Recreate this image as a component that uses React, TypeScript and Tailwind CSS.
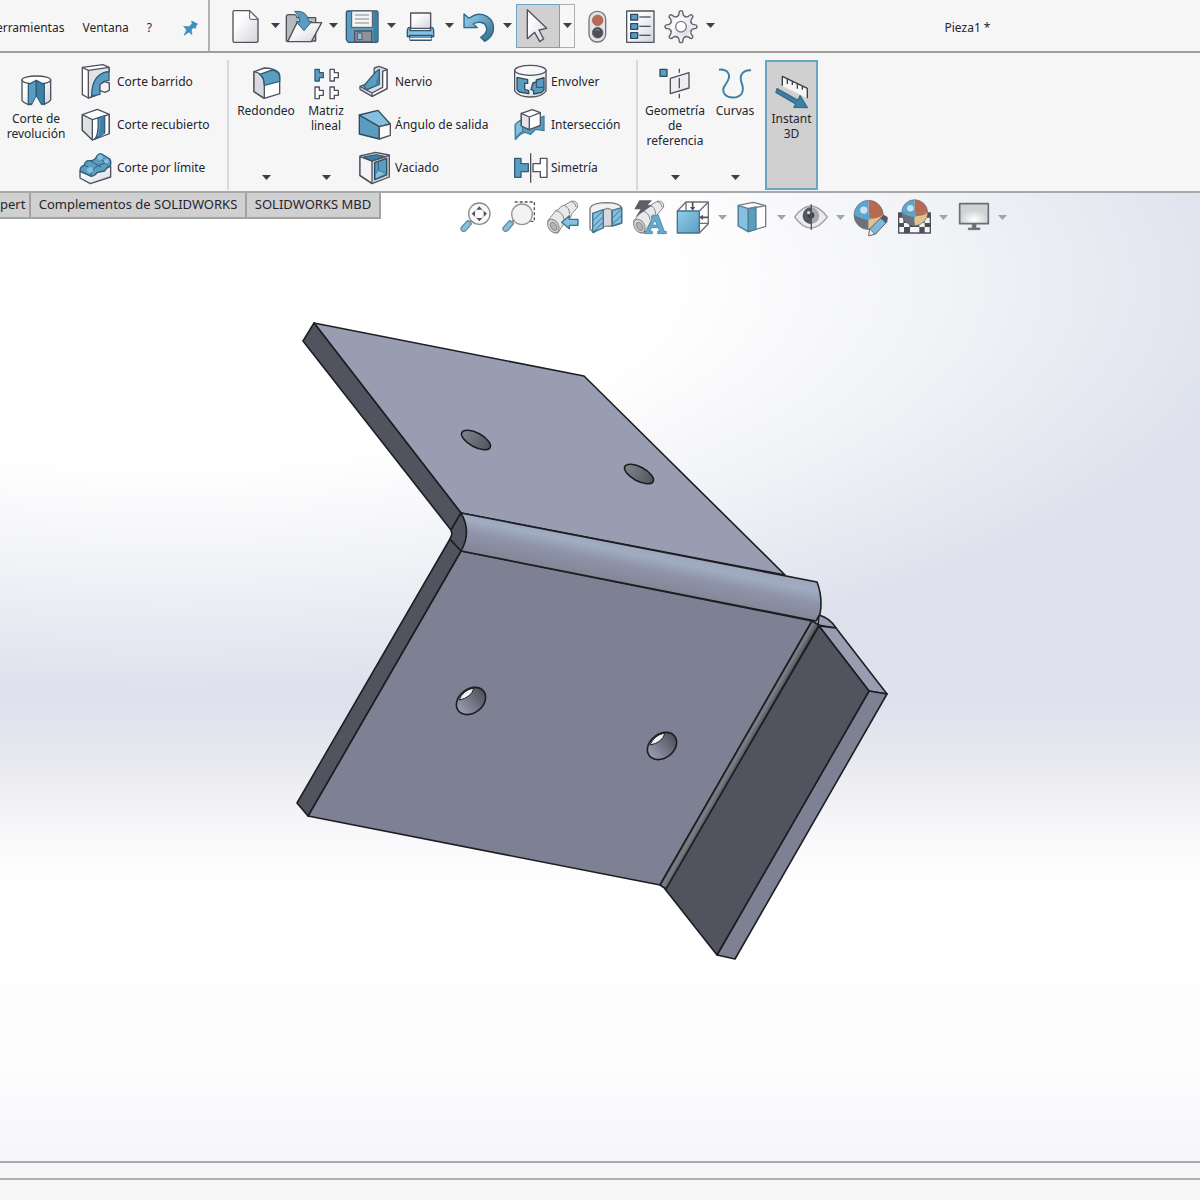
import React from "react";
import clsx from "clsx";

const INK = "#50525d";
const BLUE = "#5b9dc0";
const LIGHT_BLUE = "#86c0e0";
const DEEP_BLUE = "#3f7fa3";

type IconProps = { box: string; className?: string; children: React.ReactNode };

// Icons are drawn at 3 units per pixel
function Icon({ box, className = "size-9", children }: IconProps) {
  return (
    <svg
      viewBox={box}
      className={clsx("shrink-0", className)}
      fill="none"
      stroke={INK}
      strokeWidth={4}
      strokeLinejoin="round"
      aria-hidden="true"
    >
      {children}
    </svg>
  );
}

function Caret({ className = "text-[#3c3e4a]" }: { className?: string }) {
  return (
    <svg viewBox="0 0 18 10" className={clsx("h-[5px] w-[9px] shrink-0", className)} aria-hidden="true">
      <path d="M0 0h18L9 10z" fill="currentColor" />
    </svg>
  );
}

/* ---------- top bar icons ---------- */

const PinIcon = () => (
  <Icon box="546 54 54 54" className="size-[18px]">
    <path
      d="M575 60l18 9-5 5-1 8-7-2-6 6 2 15-9-8-15 10 8-16-9-11 16 1 9-9z"
      fill="#3d8fbc"
      stroke="#3d8fbc"
      strokeWidth={2}
    />
  </Icon>
);

const NewIcon = () => (
  <Icon box="678 17 120 120" className="size-10">
    <path d="M703 31h46l25 25v66q0 4-4 4h-67q-4 0-4-4V35q0-4 4-4z" fill="url(#paper)" />
    <path d="M749 32v22q0 3 3 3h22z" fill="#fff" strokeWidth={3} />
  </Icon>
);

const OpenIcon = () => (
  <Icon box="852 17 120 120" className="size-10">
    <path d="M859 122V50q0-7 7-7h18q5 0 7 9h56v70z" fill="#b9babd" />
    <path d="M891 67h74l-31 57h-71z" fill="url(#paper)" />
    <path d="M884 33q38-4 42 31h9l-23 27-24-27h12q-2-21-16-31z" fill={BLUE} stroke="#2f6685" strokeWidth={3} />
  </Icon>
);

const SaveIcon = () => (
  <Icon box="1026 17 120 120" className="size-10">
    <path d="M1044 32h85q5 0 5 5v84q0 5-5 5h-84l-6-8V37q0-5 5-5z" fill={BLUE} stroke="#33566b" />
    <path d="M1120 34h8q4 0 4 4v82q0 4-4 4h-8z" fill={DEEP_BLUE} stroke="none" />
    <path d="M1055 32h62v49h-62z" fill="#f4f4f4" strokeWidth={3} />
    <path d="M1065 44h42M1065 56h42M1065 68h42" strokeWidth={3} stroke="#85878f" />
    <path d="M1064 92h51v33h-51z" fill="#8f929b" />
    <path d="M1072 98h14v20h-14z" fill={LIGHT_BLUE} strokeWidth={3} />
  </Icon>
);

const PrintIcon = () => (
  <Icon box="60 17 120 120" className="size-10">
    <path d="M92 38h60v46H92z" fill="url(#paper)" />
    <path d="M82 92q0-11 8-11h2l-2 10h62l-1-10h2q8 0 8 11v17H82z" fill={LIGHT_BLUE} stroke="#33566b" />
    <path d="M88 105h68l-3 15H91z" fill={BLUE} stroke="#33566b" />
    <path d="M90 115h64" stroke="#fff" />
  </Icon>
);

const UndoIcon = () => (
  <Icon box="234 17 120 120" className="size-10">
    <path
      d="M252 41l15 13q30-22 55-5 23 15 18 43-4 20-26 31l-12-12q18-10 18-25-2-22-25-20-10 1-15 5l12 11h-40z"
      fill="url(#undo)"
      stroke="#2f6685"
    />
  </Icon>
);

const CursorIcon = () => (
  <Icon box="414 17 120 120" className="size-10">
    <path d="M442 28l58 56-23 5 14 27-12 8-15-28-22 19z" fill="url(#paper)" />
  </Icon>
);

const LightsIcon = () => (
  <Icon box="590 17 120 120" className="size-10">
    <rect x="626" y="33" width="50" height="92" rx="24" fill="#e3e4e6" stroke="#75777e" />
    <circle cx="652" cy="60" r="16" fill="#b96a55" stroke="#a05a49" strokeWidth={2} />
    <circle cx="652" cy="97" r="16" fill="#4c4e58" strokeWidth={2} />
    <path d="M646 90q6-5 12 0" stroke="#9a9ca5" strokeWidth={3} />
  </Icon>
);

const ListIcon = () => (
  <Icon box="719 17 120 120" className="size-10">
    <path d="M739 32h82v94h-82z" fill="url(#paper)" />
    {[42, 70, 97].map((y) => (
      <g key={y}>
        <path d={`M751 ${y}h21v17h-21z`} fill={BLUE} stroke="#2e4c61" />
        <path d={`M777 ${y + 8}h34`} />
      </g>
    ))}
  </Icon>
);

const GearIcon = () => {
  const teeth = [0, 45, 90, 135, 180, 225, 270, 315];
  const tooth = "M892 50q9-4 9-10 0-9 6-9t6 9q0 6 9 10";
  return (
    <Icon box="847 17 120 120" className="size-10">
      <circle cx="907" cy="79" r="32" fill="url(#paper)" stroke="none" />
      {teeth.map((a) => (
        <path key={a} d={tooth} transform={`rotate(${a} 907 79)`} fill="#eeeff3" stroke="#62646c" />
      ))}
      <circle cx="907" cy="79" r="16" fill="#fff" stroke="#7b7d85" />
    </Icon>
  );
};

/* ---------- ribbon icons ---------- */

const RevolveCutIcon = () => (
  <Icon box="54 60 108 108">
    <path d="M66 75v62q6 8 19 12l48-2q14-4 19-12V75z" fill="url(#paper)" />
    <ellipse cx="109" cy="75" rx="43" ry="12" fill="#fff" />
    <path d="M85 89l24-13v49l-12 20-12 4z" fill={BLUE} stroke="#2e5f7c" />
    <path d="M109 76l24 13v60l-12-5-12-19z" fill={DEEP_BLUE} stroke="#2e5f7c" />
    <path d="M97 150l12-23 13 23z" fill="#f6f6f6" stroke="#f6f6f6" strokeWidth={2} />
  </Icon>
);

const SweepCutIcon = () => (
  <Icon box="234 27 108 108">
    <path d="M247 37l62-8 18 8v12l-40 73-22 7-18-10z" fill="#fff" />
    <path d="M265 46l62-9v13q-50 6-50 74l-12 5z" fill="#e2e3e8" />
    <path d="M247 37l18 9" />
    <path d="M327 50v26q-24 2-27 20v22l-25 5q0-68 52-73z" fill={BLUE} stroke="#2e5f7c" />
    <path d="M300 88l13-8 15 4v22l-13 6-15-5z" fill="#f2f2f6" />
  </Icon>
);

const LoftCutIcon = () => (
  <Icon box="234 156 108 108">
    <path d="M247 179l45-16 36 15v58l-50 19-31-29z" fill="#fff" />
    <path d="M247 179l30 15v61l-30-29z" fill="#dfe0e6" />
    <path d="M277 194l51-16v58" />
    <path d="M294 189l20-6v51l-31 19q14-11 11-64z" fill={BLUE} stroke="#2e5f7c" />
    <path d="M312 184v47l-16 9q6-20 5-53z" fill={DEEP_BLUE} stroke="none" />
  </Icon>
);

const BoundaryCutIcon = () => (
  <Icon box="234 285 108 108">
    <path d="M240 349l32 14 60-30v33l-61 20-31-17z" fill="url(#paper)" />
    <path
      d="M240 348q0-14 12-17 5-16 17-14 16 1 21-13 7-11 15-7l25 15q5 12 0 22-10 2-16 14-13 2-22 4-8 11-18 12z"
      fill={BLUE}
      stroke="#2e5f7c"
    />
    <path d="M252 331q12 4 26 12M270 317l33 19M290 304q12 6 34 27M272 362q2-30 53-40" stroke="#2e5f7c" strokeWidth={3} />
    <circle cx="270" cy="345" r="9" fill={LIGHT_BLUE} stroke="none" />
    <circle cx="300" cy="307" r="8" fill={LIGHT_BLUE} stroke="none" />
    <circle cx="319" cy="319" r="7" fill={LIGHT_BLUE} stroke="none" />
  </Icon>
);

const FilletIcon = () => (
  <Icon box="84 36 108 108">
    <path d="M102 50l31-11q14 0 27 4 18 6 19 17v56l-46 14-31-20z" fill="#fff" />
    <path d="M102 50q29 4 31 40v40l-31-20z" fill="#d9dae1" />
    <path d="M119 58l38-13q21 4 22 22v12l-46 12q0-25-14-33z" fill={BLUE} stroke="#2e5f7c" />
  </Icon>
);

const TEE = "M0 2h13v10h12v15H13v10H0z";

const PatternIcon = () => (
  <Icon box="264 36 108 108">
    <path d={TEE} transform="translate(285 41)" fill={BLUE} stroke="#2e5f7c" />
    <path d={TEE} transform="translate(330 41)" fill="#fff" />
    <path d={TEE} transform="translate(285 94)" fill="#fff" />
    <path d={TEE} transform="translate(330 94)" fill="#fff" />
  </Icon>
);

const RibIcon = () => (
  <Icon box="405 27 108 108">
    <path d="M460 39l14-5 24 9v58l-45 23-36-21v-9l41-15z" fill="#dcdde3" />
    <path d="M485 49l13-6v58l-45 23v-10l32-17zM417 94l36 20" fill="#fff" />
    <path d="M475 43v45l-37 16-10-11 35-41z" fill={BLUE} stroke="#2e5f7c" />
    <path d="M475 43v45l-12 5z" fill={DEEP_BLUE} stroke="none" />
  </Icon>
);

const DraftIcon = () => (
  <Icon box="405 156 108 108">
    <path d="M415 180l60 34v38l-60-15z" fill={BLUE} stroke="#2e4c61" />
    <path d="M415 180l56-14 37 41-33 8z" fill={LIGHT_BLUE} stroke="#2e4c61" />
    <path d="M475 215l33-8v34l-33 11z" fill="#fafafa" />
  </Icon>
);

const ShellIcon = () => (
  <Icon box="405 285 108 108">
    <path d="M417 303l47-11 41 8v66l-52 20-36-24z" fill="#d4d5d9" />
    <path d="M417 305l36 13v67l-36-24z" fill="#f4f4f7" />
    <path d="M461 323l36-13v50l-36 14z" fill={BLUE} stroke="#2e4c61" />
    <path d="M428 306l38-7 28 6-41 13z" fill={DEEP_BLUE} stroke="#2e4c61" strokeWidth={3} />
    <path d="M472 320v26l25 10-34 16v-14l9-12z" fill={LIGHT_BLUE} stroke="#2e5f7c" strokeWidth={2} />
    <path d="M453 318l52-17" />
  </Icon>
);

const WrapIcon = () => (
  <Icon box="216 27 108 108">
    <path d="M224 46v62q12 18 47 18t47-18V46z" fill="url(#paper)" />
    <ellipse cx="271" cy="46" rx="47" ry="15" fill="#f7f7fa" />
    <path d="M231 67l32 7v11h-9v18l12 4v9l-28-5-7-7z" fill={BLUE} stroke="#2e4c61" />
    <path d="M279 84l10-3v-6l23-7v37l-9 8-22 4v-10l-8-4z" fill={BLUE} stroke="#2e4c61" />
    <path d="M289 80v17h20" stroke="#2e4c61" strokeWidth={3} />
  </Icon>
);

const IntersectIcon = () => (
  <Icon box="216 156 108 108">
    <path d="M226 209q16-18 34-14 26 4 52-12v44l-25-4-15 15-16-6q-15 2-29 21z" fill={BLUE} stroke={DEEP_BLUE} />
    <path d="M226 209q10-13 22-13v34q-12 6-22 23z" fill={LIGHT_BLUE} stroke={DEEP_BLUE} />
    <path d="M244 175l33-11 24 9v38l-33 13-24-11z" fill="#fff" />
    <path d="M244 175l24 11v38l-24-11zM268 186l33-13" fill="#e4e5ea" />
  </Icon>
);

const MirrorIcon = () => (
  <Icon box="216 285 108 108">
    <path d="M224 310h19v16h22v24h-22v17h-19z" fill={BLUE} stroke="#2e5f7c" />
    <path d="M321 310h-20v16h-22v24h22v17h20z" fill="#fff" />
    <path d="M272 295v88" />
  </Icon>
);

const GeometryIcon = () => (
  <Icon box="81 36 108 108">
    <path d="M90 43h21v21H90z" fill={BLUE} stroke="#2e4c61" />
    <path d="M121 70l56-17v46l-56 17z" fill="#eeeef2" />
    <path d="M148 41v12M148 69v31M148 116v14" />
  </Icon>
);

const CurvesIcon = () => (
  <Icon box="264 36 108 108">
    <path
      d="M270 44c28-2 35 16 27 32-9 18-22 25-9 43 12 12 38 12 49-2 16-22-10-38 0-57 6-11 17-15 29-14"
      stroke={DEEP_BLUE}
      strokeWidth={6}
    />
  </Icon>
);

const Instant3dIcon = () => (
  <Icon box="429 60 108 108">
    <path d="M454 64l75 36v30l-75-37z" fill="#f6f6f6" stroke="none" />
    <path d="M454 92V64l75 36v30M469 72v15M484 79v11M499 86v15M514 93v11" stroke="#3b3d48" />
    <path d="M438 101l63 35 6-14 22 36-40-1 5-10-59-35z" fill={DEEP_BLUE} stroke="#336b8b" />
  </Icon>
);

/* ---------- view toolbar icons ---------- */

const Handle = ({ x }: { x: number }) => (
  <g transform={`translate(${x} 0)`}>
    <path d="M83 91l12 10-17 20q-6 6-12 1-6-5-1-11z" fill={LIGHT_BLUE} stroke="#6a8ba0" />
    <path d="M90 96l7-7" stroke="#85878f" strokeWidth={7} />
  </g>
);

const ZoomFitIcon = () => (
  <Icon box="45 21 120 120" className="size-10">
    <Handle x={0} />
    <circle cx="118" cy="71" r="32" fill="#fafafa" stroke="#8a8b90" />
    <path d="M118 49l9 10h-18zM118 94l9-10h-18zM95 71l10-9v18zM141 71l-10-9v18z" fill={INK} stroke="none" />
    <path d="M108 61l-2 3M128 61l3 3M106 80l3 3M131 79l-4 4" stroke="#9a9ca2" strokeWidth={3} />
  </Icon>
);

const ZoomAreaIcon = () => (
  <Icon box="177 21 120 120" className="size-10">
    <path d="M224 36h59v58h-40" strokeDasharray="9 6" />
    <Handle x={126} />
    <circle cx="246" cy="73" r="31" fill="#f3f3f4" stroke="#96979c" />
  </Icon>
);

const Scope = ({ x }: { x: number }) => (
  <g transform={`translate(${x} 0)`} stroke="#88898e" strokeWidth={3}>
    <path d="M323 93l24-31q12-3 16-13l10-3 22-13q20 0 18 18l-17 20-4 12-14 7-24 39q-26 4-31-36z" fill="#e9e9ea" />
    <path d="M347 62q22 4 25 27M372 46q16 5 17 27M393 34q14 4 16 18" />
    <ellipse cx="340" cy="108" rx="15" ry="22" transform="rotate(-32 340 108)" fill="#d5d5d5" />
    <ellipse cx="341" cy="109" rx="8" ry="13" transform="rotate(-32 341 109)" fill="#b4b4b6" />
  </g>
);

const PreviousViewIcon = () => (
  <Icon box="309 21 120 120" className="size-10">
    <Scope x={0} />
    <path d="M365 97l23-20v11h26v18h-26v10z" fill={LIGHT_BLUE} stroke="#3a7190" />
  </Icon>
);

const SectionIcon = () => (
  <Icon box="441 21 120 120" className="size-10">
    <path d="M450 55q5-16 46-17 44 0 49 16v45l-30 9h-25l-29 20-11-11z" fill="#f1f1f2" stroke="#77797f" />
    <path d="M490 60q12-9 25 0v47l-25 3z" fill="#d7d8db" stroke="#8c8d92" />
    <path d="M458 70l32-11v55l-32 13zM517 61l28-8v46l-28 9z" fill={LIGHT_BLUE} stroke="#41728f" />
    <path d="M459 91l27-25M460 109l29-28M463 123l26-26M519 83l23-24M519 101l25-25" stroke="#41728f" strokeWidth={3} />
  </Icon>
);

const DynamicIcon = () => (
  <Icon box="573 21 120 120" className="size-10">
    <Scope x={258} />
    <path d="M598 31h38l-13 15h14l-50 35 15-23h-19z" fill="#5d5f68" stroke="none" />
    <path
      d="M638 75h17l18 49h6v7h-26v-7h6l-4-11h-21l-4 11h7v7h-24v-7h7l17-42h-4zm7 16l-8 14h14z"
      fill="#63abd3"
      stroke="#41728f"
      strokeWidth={2}
      fillRule="evenodd"
    />
  </Icon>
);

const OrientationIcon = () => (
  <Icon box="699 21 120 120" className="size-10">
    <path d="M712 63l26-27h67v65l-27 28M738 36v27M805 36l-27 27M778 100h27" fill="none" stroke="#6d6f77" />
    <path d="M712 63h66v66h-66z" fill="url(#glass)" stroke="#41728f" />
    <path d="M758 36v18M804 82h-18" strokeWidth={5} />
    <path d="M758 62l-8-11h16zM777 82l12-8v16z" fill={INK} stroke="none" />
  </Icon>
);

const DisplayStyleIcon = () => (
  <Icon box="36 21 120 120" className="size-10">
    <path d="M55 46l45-9 37 10v62l-52 16-30-17z" fill="#fff" stroke="#7a7c83" />
    <path d="M55 46l30 10v69l-30-17z" fill={LIGHT_BLUE} stroke="#4e7f9b" />
    <path d="M85 56l23-5v67l-23 7z" fill={BLUE} stroke="#4e7f9b" />
    <path d="M85 56l52-9" stroke="#7a7c83" />
  </Icon>
);

const HideShowIcon = () => (
  <Icon box="213 21 120 120" className="size-10">
    <path d="M224 81q48-66 98 0-50 66-98 0z" fill="#ececee" stroke="#a2a3a8" />
    <circle cx="273" cy="77" r="25" fill="#a8a9ad" stroke="none" />
    <path d="M273 52a25 25 0 0 0 0 50z" fill="#54565f" stroke="none" />
    <circle cx="273" cy="76" r="10" fill="#3f414a" stroke="none" />
    <circle cx="266" cy="68" r="5" fill="#d5d5d8" stroke="none" />
    <path d="M274 43v76" />
  </Icon>
);

const Ball = ({ cx, cy, r }: { cx: number; cy: number; r: number }) => (
  <g stroke="none">
    <path d={`M${cx} ${cy}V${cy - r}a${r} ${r} 0 0 0-${r} ${r}z`} fill="#5ba6d0" />
    <path d={`M${cx} ${cy}V${cy - r}a${r} ${r} 0 0 1 ${r} ${r}z`} fill="#b8694f" />
    <path d={`M${cx} ${cy}H${cx - r}a${r} ${r} 0 0 0 ${r} ${r}z`} fill="#6a7379" />
    <path d={`M${cx} ${cy}H${cx + r}a${r} ${r} 0 0 1-${r} ${r}z`} fill="#e0c390" />
    {/* the colour seams bulge towards the viewer */}
    <path d={`M${cx - r} ${cy}q${r} ${r / 2} ${r + 6} ${r / 4}V${cy - 2}z`} fill="#5ba6d0" />
    <path d={`M${cx + 6} ${cy + r / 4}q${r / 2} 0 ${r - 7}-${r / 4}H${cx}z`} fill="#b8694f" />
    <circle cx={cx - r / 3} cy={cy - r / 3} r={r / 4} fill="#c4e3f3" />
    <circle cx={cx} cy={cy} r={r} fill="none" stroke="#6b6d75" strokeWidth={2} />
  </g>
);

const AppearanceIcon = () => (
  <Icon box="396 21 120 120" className="size-10">
    <Ball cx={446} cy={75} r={44} />
    <path d="M482 84l20 10-35 38-20 5 2-20z" fill="#7fb9da" stroke="#4f6070" strokeWidth={3} />
    <path d="M482 84l8-8q12 2 13 10l-6 12z" fill="#565862" strokeWidth={2} />
    <path d="M449 116l15 16-18 6z" fill="#f1ede4" strokeWidth={2} />
  </Icon>
);

const SceneIcon = () => (
  <Icon box="522 21 120 120" className="size-10">
    <path d="M536 69h95v60h-95z" fill="#f4f4f4" />
    <path
      d="M536 69h14v14h-14zM614 69h17v14h-17zM550 83h16v16h-16zM600 83h14v16h-14zM536 99h16v12h-16zM568 99h30v12h-30zM614 99h17v12h-17zM552 111h18v18h-18zM598 111h16v18h-16z"
      fill="#4c4e58"
      stroke="none"
    />
    <Ball cx={584} cy={68} r={39} />
  </Icon>
);

const MonitorIcon = () => (
  <Icon box="699 21 120 120" className="size-10">
    <path d="M719 41h86v60h-86z" fill="url(#screen)" stroke="#6c6e76" strokeWidth={5} />
    <path d="M757 102h11v12h12v5h-35v-5h12z" fill="#6c6e76" stroke="#6c6e76" strokeWidth={2} />
  </Icon>
);

/* ---------- chrome ---------- */

function ToolButton({ label, caret, children }: { label: string; caret?: boolean; children: React.ReactNode }) {
  return (
    <button
      type="button"
      aria-label={label}
      className={clsx("flex h-11 items-center", caret ? "w-[58px] gap-[5px]" : "w-[43px] justify-center")}
    >
      {children}
      {caret && <Caret />}
    </button>
  );
}

function ViewButton({ label, caret, children }: { label: string; caret?: boolean; children: React.ReactNode }) {
  return (
    <button
      type="button"
      aria-label={label}
      className={clsx("flex h-10 items-center", caret ? "w-[59px] gap-[5px]" : "w-11 justify-center")}
    >
      {children}
      {caret && <Caret className="text-[#a3a4a9]" />}
    </button>
  );
}

type RibbonItem = { label: string; icon: React.ReactNode };

function RibbonList({ items, className }: { items: RibbonItem[]; className: string }) {
  return (
    <div className={clsx("flex shrink-0 flex-col", className)}>
      {items.map((it) => (
        <button key={it.label} type="button" className="flex h-[43px] items-center gap-[3px] text-left whitespace-nowrap">
          {it.icon}
          <span>{it.label}</span>
        </button>
      ))}
    </div>
  );
}

function RibbonButton({ lines, icon }: { lines: string[]; icon: React.ReactNode }) {
  return (
    <button type="button" className="flex w-[60px] shrink-0 flex-col items-center pt-[7px] pb-[10px] leading-[15px]">
      {icon}
      {lines.map((l) => (
        <span key={l} className="whitespace-nowrap">{l}</span>
      ))}
      <Caret className="mt-auto text-[#3c3e4a]" />
    </button>
  );
}

const Divider = () => <div className="w-[2px] shrink-0 bg-[#d5d9e3]" />;

const cuts: RibbonItem[] = [
  { label: "Corte barrido", icon: <SweepCutIcon /> },
  { label: "Corte recubierto", icon: <LoftCutIcon /> },
  { label: "Corte por límite", icon: <BoundaryCutIcon /> },
];

const features: RibbonItem[] = [
  { label: "Nervio", icon: <RibIcon /> },
  { label: "Ángulo de salida", icon: <DraftIcon /> },
  { label: "Vaciado", icon: <ShellIcon /> },
];

const bodies: RibbonItem[] = [
  { label: "Envolver", icon: <WrapIcon /> },
  { label: "Intersección", icon: <IntersectIcon /> },
  { label: "Simetría", icon: <MirrorIcon /> },
];

function TopBar() {
  return (
    <header className="flex h-[53px] items-center border-b-2 border-[#a09e9c]">
      <nav className="flex h-full w-[210px] shrink-0 items-center justify-end gap-[18px] overflow-hidden border-r-2 border-[#b4b2b0] pt-1 pr-2 whitespace-nowrap">
        <button type="button">erramientas</button>
        <button type="button">Ventana</button>
        <button type="button">?</button>
        <button type="button" aria-label="Fijar menú" className="ml-3">
          <PinIcon />
        </button>
      </nav>
      <div className="ml-4 flex shrink-0 items-center">
        <ToolButton label="Nuevo" caret><NewIcon /></ToolButton>
        <ToolButton label="Abrir" caret><OpenIcon /></ToolButton>
        <ToolButton label="Guardar" caret><SaveIcon /></ToolButton>
        <ToolButton label="Imprimir" caret><PrintIcon /></ToolButton>
        <ToolButton label="Deshacer" caret><UndoIcon /></ToolButton>
        <button
          type="button"
          aria-label="Seleccionar"
          className="flex h-11 w-11 items-center justify-center border border-[#6aa5c5] bg-[#d0d0d0]"
        >
          <CursorIcon />
        </button>
        <button
          type="button"
          aria-label="Opciones de selección"
          className="flex h-11 w-[15px] items-center justify-center border border-l-0 border-[#b0b0b4]"
        >
          <Caret />
        </button>
        <ToolButton label="Reconstruir"><LightsIcon /></ToolButton>
        <ToolButton label="Propiedades"><ListIcon /></ToolButton>
        <ToolButton label="Opciones" caret><GearIcon /></ToolButton>
      </div>
      <h1 className="flex-1 pt-1 pl-4 text-center">Pieza1 *</h1>
    </header>
  );
}

function Ribbon() {
  return (
    <section className="flex h-[140px] items-stretch border-b-2 border-[#a8a8a8] pt-[7px] pb-px">
      <button type="button" className="mr-[6px] flex w-[72px] shrink-0 flex-col items-center pt-[15px] leading-[15px]">
        <RevolveCutIcon />
        <span>Corte de</span>
        <span>revolución</span>
      </button>
      <RibbonList items={cuts} className="w-[149px]" />
      <Divider />
      <div className="ml-[7px] flex shrink-0">
        <RibbonButton lines={["Redondeo"]} icon={<FilletIcon />} />
        <RibbonButton lines={["Matriz", "lineal"]} icon={<PatternIcon />} />
      </div>
      <RibbonList items={features} className="w-[156px]" />
      <RibbonList items={bodies} className="w-[124px]" />
      <Divider />
      <div className="ml-[7px] flex shrink-0">
        <RibbonButton lines={["Geometría", "de", "referencia"]} icon={<GeometryIcon />} />
        <RibbonButton lines={["Curvas"]} icon={<CurvesIcon />} />
        <button
          type="button"
          aria-pressed="true"
          className="flex w-[53px] shrink-0 flex-col items-center border-2 border-[#6aa5c5] bg-[#d0d0d0] pt-[13px] leading-[15px]"
        >
          <Instant3dIcon />
          <span>Instant</span>
          <span>3D</span>
        </button>
      </div>
    </section>
  );
}

const TAB = "h-[26px] border-r-2 border-b-2 border-[#a3a3a3] bg-[#d0d0d0] text-[13px] whitespace-nowrap";

function ViewBar() {
  return (
    <div className="flex h-[49px] shrink-0 items-start">
      <div role="tablist" className="flex shrink-0">
        <button type="button" role="tab" className={clsx(TAB, "w-[31px] pr-2 text-right")}>pert</button>
        <button type="button" role="tab" className={clsx(TAB, "w-[216px]")}>Complementos de SOLIDWORKS</button>
        <button type="button" role="tab" className={clsx(TAB, "w-[134px]")}>SOLIDWORKS MBD</button>
      </div>
      <div className="ml-[72px] flex shrink-0 pt-1">
        <ViewButton label="Zoom para ajustar"><ZoomFitIcon /></ViewButton>
        <ViewButton label="Zoom encuadre"><ZoomAreaIcon /></ViewButton>
        <ViewButton label="Vista previa"><PreviousViewIcon /></ViewButton>
        <ViewButton label="Vista de sección"><SectionIcon /></ViewButton>
        <ViewButton label="Anotaciones dinámicas"><DynamicIcon /></ViewButton>
        <ViewButton label="Orientación de vista" caret><OrientationIcon /></ViewButton>
        <ViewButton label="Estilo de visualización" caret><DisplayStyleIcon /></ViewButton>
        <ViewButton label="Ocultar o mostrar" caret><HideShowIcon /></ViewButton>
        <ViewButton label="Editar apariencia"><AppearanceIcon /></ViewButton>
        <ViewButton label="Aplicar escena" caret><SceneIcon /></ViewButton>
        <ViewButton label="Configuración de visualización" caret><MonitorIcon /></ViewButton>
      </div>
    </div>
  );
}

/* ---------- 3D part ---------- */

function Part() {
  return (
    <svg
      viewBox="0 242 1200 919"
      className="min-h-0 w-full flex-1"
      fill="none"
      stroke="#1d1e23"
      strokeWidth={1.6}
      strokeLinejoin="round"
      role="img"
      aria-label="Pieza1"
    >
      <defs>
        <linearGradient id="barrel" gradientUnits="userSpaceOnUse" x1="640" y1="547" x2="632" y2="586">
          <stop offset="0" stopColor="#9fa7bc" />
          <stop offset="0.2" stopColor="#a0acc1" />
          <stop offset="0.5" stopColor="#8f94ab" />
          <stop offset="1" stopColor="#838594" />
        </linearGradient>
        <linearGradient id="bore">
          <stop offset="0" stopColor="#7f858c" />
          <stop offset="1" stopColor="#53545d" />
        </linearGradient>
        <linearGradient id="boreLow">
          <stop offset="0" stopColor="#9a9db3" />
          <stop offset="1" stopColor="#50515a" />
        </linearGradient>
        <linearGradient id="bend" gradientUnits="userSpaceOnUse" x1="735" y1="752" x2="742" y2="756">
          <stop offset="0" stopColor="#60646a" />
          <stop offset="0.5" stopColor="#7b8085" />
          <stop offset="1" stopColor="#5b5d65" />
        </linearGradient>
      </defs>

      {/* upper leaf */}
      <path d="M314 323L584 376 785 575 461 513z" fill="#999db2" />
      <path d="M314 323L303 341 451 530 461 513z" fill="#51535e" />
      <ellipse cx="476" cy="440" rx="16" ry="7" transform="rotate(28 476 440)" fill="url(#bore)" />
      <ellipse cx="639" cy="474" rx="16" ry="7" transform="rotate(28 639 474)" fill="url(#bore)" />

      {/* lower leaf */}
      <path d="M461 551L812 621 660 885 308 816z" fill="#7e8093" />
      <path d="M450 539L461 551 308 816 297 803z" fill="#51535e" />
      <g id="hole">
        <ellipse cx="471" cy="701" rx="16" ry="12" transform="rotate(-38 471 701)" fill="url(#boreLow)" />
        <path d="M459 700Q463 690 474 688 471 698 459 700z" fill="#f2f2f4" strokeWidth={1} />
      </g>
      <use href="#hole" x="191" y="45" />

      {/* flange */}
      <path d="M819 615Q830 618 836 628L818 625z" fill="#999db2" />
      <path d="M819 626L836 628 887 694 869 691z" fill="#999db2" />
      <path d="M869 691L887 694 735 959 717 955z" fill="#7e8093" />
      <path d="M819 626L869 691 717 955 665 889z" fill="#51535e" />
      <path d="M812 621L819 625 666 889 660 885z" fill="url(#bend)" />

      {/* knuckle */}
      <path d="M461 513L817 582Q823 598 820 614L816 621 461 551z" fill="url(#barrel)" />
      <path d="M461 513Q472 532 461 551L450 539 452 534 451 530z" fill="#51535e" />
    </svg>
  );
}

function Paints() {
  // gradients shared by the toolbar icons
  return (
    <svg className="absolute size-0" aria-hidden="true">
      <defs>
        <linearGradient id="paper" x2="1" y2="1">
          <stop offset="0.3" stopColor="#fdfdfd" />
          <stop offset="1" stopColor="#d2d4dd" />
        </linearGradient>
        <linearGradient id="undo" x2="1" y2="1">
          <stop offset="0.2" stopColor="#86c0e0" />
          <stop offset="0.9" stopColor="#36728f" />
        </linearGradient>
        <linearGradient id="glass" x2="1" y2="1">
          <stop offset="0" stopColor="#93cdeb" />
          <stop offset="1" stopColor="#5b9dc0" />
        </linearGradient>
        <radialGradient id="screen" cy="0.8">
          <stop offset="0" stopColor="#ffffff" />
          <stop offset="1" stopColor="#cfd1d2" />
        </radialGradient>
      </defs>
    </svg>
  );
}

export default function App() {
  return (
    <div className="flex min-h-screen flex-col overflow-x-hidden bg-[#f6f6f6] font-['Noto_Sans','Open_Sans',sans-serif] text-[12px] text-[#23252f]">
      <Paints />
      <TopBar />
      <Ribbon />
      <main className="flex flex-1 flex-col bg-[radial-gradient(ellipse_92%_42%_at_14%_9%,#ffffff_45%,#f3f4f7e6_72%,#e0e3ee00_100%),linear-gradient(#dde1ed_0%,#dfe2ee_53%,#e7e8ee_58%,#f8f8fa_66%,#ffffff_72%,#fdfdfe_90%,#f5f6fa_100%)]">
        <ViewBar />
        <Part />
      </main>
      <footer className="h-[39px] border-t-2 border-[#a8a8a8] pt-[15px]">
        <div className="border-t-2 border-[#b0b0b0]" />
      </footer>
    </div>
  );
}
